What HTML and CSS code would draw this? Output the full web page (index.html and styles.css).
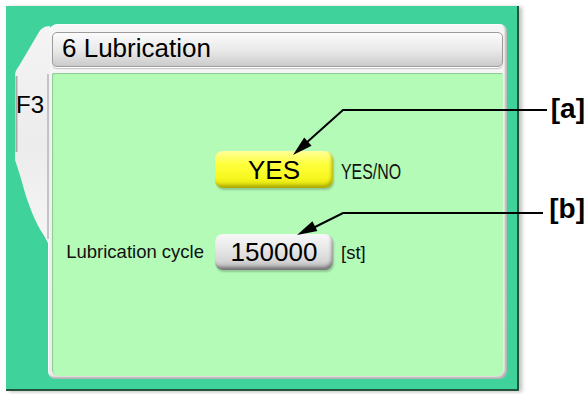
FILE: index.html
```html
<!DOCTYPE html>
<html lang="en">
<head>
    <meta charset="UTF-8">
    <title>6 Lubrication</title>
    <meta name="viewport" content="width=device-width, initial-scale=1.0">
    <link rel="stylesheet" href="styles.css">
</head>
<body>
    <div class="frame">
        <div class="tab">
            <svg class="tab-shape" width="38" height="225" viewBox="0 0 38 225">
                <defs>
                    <linearGradient id="tabfill" x1="0" y1="0" x2="0" y2="1">
                        <stop offset="0" stop-color="#f4f4f4"/>
                        <stop offset="0.55" stop-color="#ececec"/>
                        <stop offset="1" stop-color="#f6f6f6"/>
                    </linearGradient>
                </defs>
                <path d="M38 2 C32 2 29 5 27 8 L7 42 C4 46 3 48 3 52 L3 136 C8 150 11 162 14 172 C18 184 24 200 31 210 C34 215 36 219 38 223 Z" fill="url(#tabfill)"/>
                <path d="M4.5 52 V128" stroke="#a9a9a9" stroke-width="2"/>
                <path d="M36 50 V215" stroke="#c4c4c4" stroke-width="2"/>
            </svg>
            <span class="tab-label">F3</span>
        </div>

        <div class="panel">
            <div class="title-bar">6 Lubrication</div>
            <div class="content">
                <div class="grid">
                    <span class="label"></span>
                    <button class="key key-yes">YES</button>
                    <span class="unit unit-narrow">YES/NO</span>

                    <span class="label">Lubrication cycle</span>
                    <button class="key key-gray">150000</button>
                    <span class="unit">[st]</span>
                </div>
            </div>
        </div>
    </div>

    <div class="notes">
        <span class="note">[a]</span>
        <span class="note">[b]</span>
    </div>

    <!-- leader lines for the callouts -->
    <svg class="callouts" width="586" height="394" viewBox="0 0 586 394">
        <path d="M547 110 H343 L305 144" fill="none" stroke="#000" stroke-width="2"/>
        <polygon points="293,155 311.6,145.7 304.2,137.5" fill="#000"/>
        <path d="M543 213 H343 L313 228" fill="none" stroke="#000" stroke-width="2"/>
        <polygon points="297,235 317.4,231 312.4,221.2" fill="#000"/>
    </svg>
</body>
</html>
```
FILE: styles.css
```css
body {
    margin: 0;
    width: 586px;
    height: 394px;
    background-color: #fff;
    font-family: "Liberation Sans", Arial, sans-serif;
    display: flex;
    align-items: flex-start;
    position: relative;
    overflow: hidden;
}
.frame {
    margin: 6px 0 0 6px;
    width: 513px;
    height: 385px;
    box-sizing: border-box;
    background-color: #3fd39b;
    border-right: 2px solid #23523d;
    border-bottom: 2px solid #23523d;
    box-shadow: 3px 1px 4px rgba(0,0,0,0.25);
    display: flex;
    align-items: flex-start;
    padding: 18px 10px 10px 6px;
}
.tab {
    position: relative;
    width: 38px;
    height: 225px;
    flex-shrink: 0;
}
.tab-shape {
    display: block;
}
.tab-label {
    position: absolute;
    left: 4px;
    top: 69px;
    font-size: 24px;
    line-height: 24px;
    color: #000;
}
.panel {
    margin-left: -2px;
    width: 459px;
    height: 355px;
    box-sizing: border-box;
    padding: 8px 4px 3px 4px;
    background: linear-gradient(to bottom, #f6f6f6, #ececec);
    border-radius: 10px 8px 8px 8px;
    box-shadow: inset -2px -2px 2px rgba(0,0,0,0.25), inset 1px 1px 1px rgba(255,255,255,0.9);
    display: flex;
    flex-direction: column;
    gap: 6px;
}
.title-bar {
    height: 33px;
    border: 1px solid #9c9c9c;
    border-radius: 5px;
    background: linear-gradient(to bottom, #fbfbfb, #e8e8e8 55%, #cbcbcb);
    box-shadow: 0 1px 0 #fff, 0 2px 1px rgba(0,0,0,0.2);
    padding-left: 9px;
    font-size: 26px;
    line-height: 31px;
    color: #000;
}
.content {
    flex: 1;
    background-color: #b4fbb8;
    border-radius: 2px 2px 6px 6px;
    box-shadow: inset 1px 1px 1px rgba(0,0,0,0.2);
    padding: 78px 0 0 14px;
}
.grid {
    display: grid;
    grid-template-columns: 138px 129px auto;
    grid-auto-rows: 37px;
    row-gap: 45px;
    align-items: center;
}
.label {
    justify-self: end;
    font-size: 18.5px;
    color: #111;
    padding-top: 1px;
}
.key {
    margin-left: 11px;
    height: 37px;
    width: 118px;
    border: none;
    border-radius: 8px;
    font-family: "Liberation Sans", Arial, sans-serif;
    font-size: 26px;
    color: #000;
    padding: 0;
    padding-top: 1px;
}
.key-yes {
    background: linear-gradient(to bottom, #ffff9a, #ffff3c 35%, #f6f61e 75%, #d6d60a);
    box-shadow: inset -2px -3px 3px rgba(120,120,0,0.45), 1px 2px 2px rgba(0,0,0,0.2);
}
.key-gray {
    height: 36px;
    background: linear-gradient(to bottom, #f8f8f8, #e6e6e6 45%, #d6d6d6 75%, #a8a8a8);
    box-shadow: inset -2px -3px 3px rgba(0,0,0,0.3), 1px 2px 2px rgba(0,0,0,0.2);
}
.unit {
    margin-left: 8px;
    font-size: 18.5px;
    color: #111;
    padding-top: 3px;
}
.unit-narrow {
    font-size: 21.5px;
    transform: scaleX(0.74);
    transform-origin: left center;
    white-space: nowrap;
    padding-top: 5px;
}
.notes {
    margin-left: auto;
    width: 38px;
    margin-top: 93px;
    display: flex;
    flex-direction: column;
    gap: 68px;
    text-align: right;
    padding-right: 1px;
}
.note {
    font-size: 28px;
    font-weight: bold;
    line-height: 32px;
    color: #000;
}
.callouts {
    position: absolute;
    left: 0;
    top: 0;
    pointer-events: none;
}
```
